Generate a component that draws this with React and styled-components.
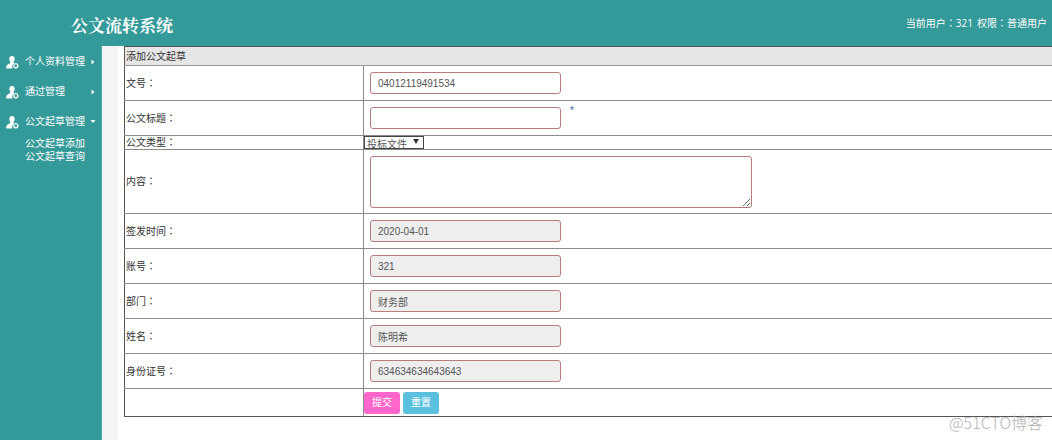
import React from "react";
import styled, { createGlobalStyle } from "styled-components";

const GlobalStyle = createGlobalStyle`
  *, *::before, *::after { box-sizing: border-box; }
  body {
    margin: 0;
    background: #fff;
    color: #333;
    font-family: "Liberation Sans", "Noto Sans CJK SC", sans-serif;
    font-size: 10px;
    line-height: 14px;
  }
  input, textarea, select, button { font: inherit; color: inherit; margin: 0; }
`;

const Page = styled.div`
  display: flex;
  flex-direction: column;
  min-height: 100vh;
  overflow: hidden;
`;

const TopBar = styled.header`
  display: flex;
  align-items: center;
  justify-content: space-between;
  height: 46px;
  padding: 0 5px 0 71px;
  background: #339999;
  color: #fff;
`;

const Title = styled.h1`
  margin: 0;
  padding-top: 3px;
  font-family: "Noto Serif CJK SC", "Noto Sans CJK SC", serif;
  font-size: 17px;
  line-height: 24px;
  font-weight: 700;
`;

const UserInfo = styled.div`
  display: flex;
  gap: 4px;
  white-space: nowrap;
  font-family: "Open Sans", "Noto Sans CJK SC", sans-serif;
`;

const Colon = styled.span`
  font-family: "Noto Sans CJK JP", sans-serif;
`;

const Body = styled.div`
  display: flex;
  flex: 1;
`;

const Sidebar = styled.nav`
  flex: none;
  width: 102px;
  padding-top: 1px;
  background: #339999;
  color: #fff;
  border-right: 1px solid #55aaaa;
`;

const MenuButton = styled.button`
  display: flex;
  align-items: center;
  width: 100%;
  height: 30px;
  padding: 0 5px 0 6px;
  border: 0;
  background: none;
  text-align: left;
`;

const MenuText = styled.span`
  flex: 1;
  padding-left: 6px;
  white-space: nowrap;
`;

const SubMenu = styled.div`
  display: flex;
  flex-direction: column;
  padding-left: 25px;
`;

const SubLink = styled.a`
  color: #fff;
  line-height: 13px;
  text-decoration: none;
  white-space: nowrap;
`;

const Gutter = styled.div`
  flex: none;
  width: 16px;
  background: #f5f5f5;
`;

const Main = styled.main`
  flex: 1;
  min-width: 0;
  padding-left: 6px;
`;

const Table = styled.table`
  width: calc(100% + 4px);
  table-layout: fixed;
  border-collapse: collapse;
  border: 1px solid #555;

  th:first-child {
    border-left-color: #555;
  }

  tr:last-child > * {
    border-bottom-color: #555;
  }
`;

const LabelCol = styled.col`
  width: 239px;
`;

const Row = styled.tr`
  height: ${(p) => p.$height}px;
`;

const Heading = styled.th`
  padding: 1px 0 0 1px;
  border-bottom: 1px solid #999;
  background: #e6e6e6;
  font-weight: 400;
  text-align: left;
`;

const LabelCell = styled.th`
  padding: 0 0 0 1px;
  border: 1px solid #8c8c8c;
  font-weight: 400;
  line-height: 12px;
  text-align: left;
  vertical-align: middle;
`;

const FieldCell = styled.td`
  padding: 0 0 0 ${(p) => (p.$flush ? 0 : 6)}px;
  border: 1px solid #8c8c8c;
  vertical-align: middle;
`;

const FieldLine = styled.div`
  display: flex;
  gap: ${(p) => p.$gap || 0}px;
`;

const TextInput = styled.input`
  display: block;
  width: 191px;
  height: 22px;
  padding: 0 7px;
  border: 1px solid #b87c7c;
  border-radius: 3px;
  background: ${(p) => (p.readOnly ? "#eeeeee" : "#fff")};
  color: #555;
  outline: 0;
`;

const TextArea = styled.textarea`
  display: block;
  width: 382px;
  height: 52px;
  padding: 4px 7px;
  border: 1px solid #b87c7c;
  border-radius: 3px;
  color: #555;
  outline: 0;
`;

const Required = styled.span`
  color: #336699;
  line-height: 8px;
`;

const SelectBox = styled.div`
  display: grid;
  width: 60px;
  height: 13px;
  overflow: hidden;
  border: 1px solid #444;
`;

const Select = styled.select`
  grid-area: 1 / 1;
  width: 58px;
  height: 16px;
  padding: 0 0 0 2px;
  border: 0;
  appearance: none;
  background: none;
  color: #555;
  outline: 0;
`;

const SelectArrow = styled.svg`
  grid-area: 1 / 1;
  justify-self: end;
  margin: 2px 4px 0 0;
  pointer-events: none;
`;

const ActionButton = styled.button`
  height: 22px;
  padding: 0 8px;
  border: 0;
  border-radius: 3px;
  background: ${(p) => p.$color};
  color: #fff;
`;

const Watermark = styled.div`
  position: absolute;
  right: 9px;
  bottom: 6px;
  color: #b4b4b4;
  font-family: "Noto Sans CJK SC", sans-serif;
  font-size: 16px;
  font-weight: 300;
  line-height: 24px;
`;

const UserIcon = () => (
  <svg width="13" height="13" viewBox="0 0 13 13" fill="#fff" aria-hidden="true">
    <ellipse cx="6" cy="3" rx="2.7" ry="2.9" />
    <path d="M4.1 5.4h3.6v1.3l.8.5C6.7 8 5.9 9.4 6.4 12.4H.8C0 12.4 0 11.8.2 11c.4-1.9 1.4-2.9 3.9-3.8z" />
    <circle cx="9.8" cy="9.8" r="2" fill="none" stroke="#fff" strokeWidth="1.1" />
    <path
      d="M9.8 6.8v1M9.8 11.8v1M6.9 9.8h.9M11.8 9.8h1M7.8 7.8l.6.6M11.2 11.2l.6.6M7.8 11.8l.6-.6M11.2 8.4l.6-.6"
      stroke="#fff"
      strokeWidth=".8"
    />
  </svg>
);

const Caret = ({ open }) => (
  <svg width="6" height="6" viewBox="0 0 6 6" fill="#fff" aria-hidden="true">
    <path d={open ? "M.5 1h5L3 4z" : "M1.5.5v5L4.5 3z"} />
  </svg>
);

const MenuItem = ({ text, open }) => (
  <MenuButton type="button" aria-expanded={!!open}>
    <UserIcon />
    <MenuText>{text}</MenuText>
    <Caret open={open} />
  </MenuButton>
);

const FormRow = ({ id, label, height = 35, flush, children }) => (
  <Row $height={height}>
    <LabelCell scope="row">
      {label && (
        <label htmlFor={id}>
          {label}
          <Colon>：</Colon>
        </label>
      )}
    </LabelCell>
    <FieldCell $flush={flush}>{children}</FieldCell>
  </Row>
);

const lockedFields = [
  { id: "date", label: "签发时间", value: "2020-04-01" },
  { id: "account", label: "账号", value: "321" },
  { id: "department", label: "部门", value: "财务部" },
  { id: "name", label: "姓名", value: "陈明希" },
  { id: "idcard", label: "身份证号", value: "634634634643643" },
];

export default function App() {
  return (
    <Page>
      <GlobalStyle />
      <TopBar>
        <Title>公文流转系统</Title>
        <UserInfo>
          <span>当前用户<Colon>：</Colon>321</span>
          <span>权限<Colon>：</Colon>普通用户</span>
        </UserInfo>
      </TopBar>
      <Body>
        <Sidebar>
          <MenuItem text="个人资料管理" />
          <MenuItem text="通过管理" />
          <MenuItem text="公文起草管理" open />
          <SubMenu>
            <SubLink href="#add">公文起草添加</SubLink>
            <SubLink href="#query">公文起草查询</SubLink>
          </SubMenu>
        </Sidebar>
        <Gutter />
        <Main>
          <form onSubmit={(e) => e.preventDefault()}>
            <Table>
              <colgroup>
                <LabelCol />
                <col />
              </colgroup>
              <tbody>
                <Row $height={19}>
                  <Heading colSpan={2}>添加公文起草</Heading>
                </Row>
                <FormRow id="number" label="文号">
                  <TextInput id="number" defaultValue="04012119491534" />
                </FormRow>
                <FormRow id="title" label="公文标题">
                  <FieldLine $gap={9}>
                    <TextInput id="title" />
                    <Required>*</Required>
                  </FieldLine>
                </FormRow>
                <FormRow id="type" label="公文类型" height={14} flush>
                  <SelectBox>
                    <Select id="type" defaultValue="投标文件">
                      <option>投标文件</option>
                    </Select>
                    <SelectArrow width="6" height="5" viewBox="0 0 6 5" fill="#333">
                      <path d="M0 0h6L3 5z" />
                    </SelectArrow>
                  </SelectBox>
                </FormRow>
                <FormRow id="content" label="内容" height={64}>
                  <TextArea id="content" />
                </FormRow>
                {lockedFields.map((f) => (
                  <FormRow key={f.id} id={f.id} label={f.label}>
                    <TextInput id={f.id} defaultValue={f.value} readOnly />
                  </FormRow>
                ))}
                <FormRow height={28} flush>
                  <FieldLine $gap={3}>
                    <ActionButton type="submit" $color="#ff66cc">提交</ActionButton>
                    <ActionButton type="reset" $color="#5bc0de">重置</ActionButton>
                  </FieldLine>
                </FormRow>
              </tbody>
            </Table>
          </form>
        </Main>
      </Body>
      <Watermark>@51CTO博客</Watermark>
    </Page>
  );
}
